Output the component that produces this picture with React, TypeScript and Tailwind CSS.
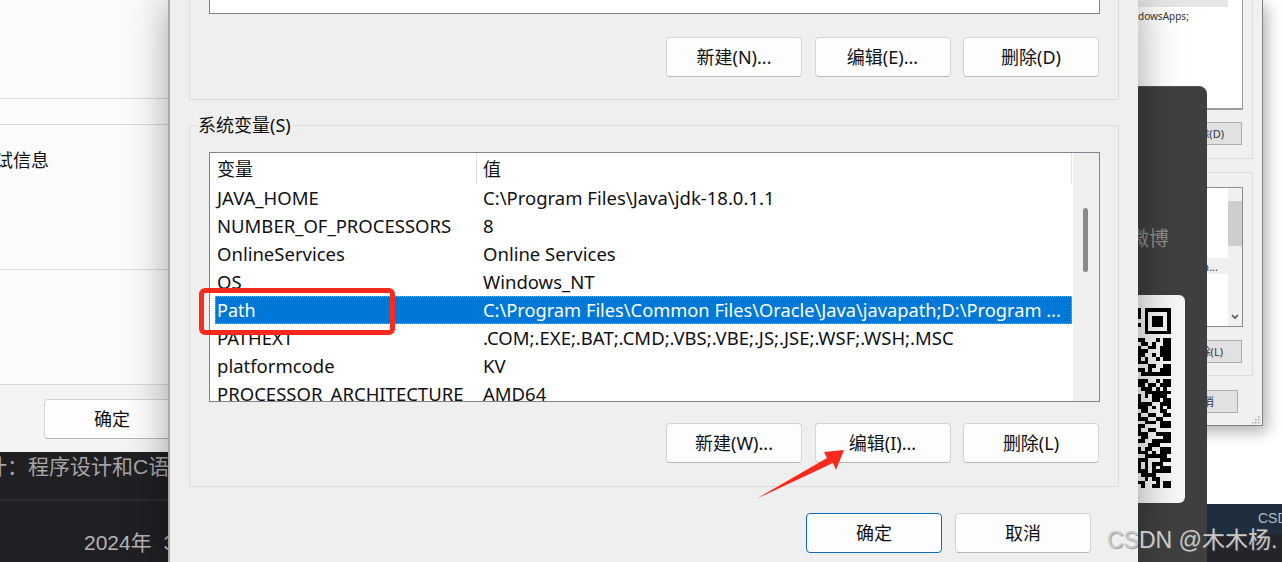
const QR = [
  "101111111",
  "101000001",
  "101011101",
  "001011101",
  "101011101",
  "001000001",
  "001111111",
  "000000000",
  "110001011",
  "011010011",
  "100110111",
  "111000111",
  "110010111",
  "101001011",
  "111000000",
  "000110011",
  "110100111",
  "011111111",
  "000000000",
  "111001011",
  "110110111",
  "011101010",
  "001111111",
  "101011110",
  "100011011",
  "111100111",
  "111010101",
  "011000110",
  "100110011",
  "111001100",
  "001110111",
  "110000111",
  "100110000",
  "111001111",
  "011000011",
  "110011111",
  "000111000",
  "101100111",
  "111010111",
  "001111110",
  "111000111",
  "101011100",
  "101010111",
  "111011111",
  "011110000",
  "001011000",
  "110001011",
  "010011011",
];

function Btn({ children, primary, className }: { children: React.ReactNode; primary?: boolean; className?: string }) {
  return (
    <div
      className={
        "flex h-10 w-[136px] items-center justify-center rounded-[4px] border bg-[#fdfdfd] text-[18px] text-[#111] " +
        (primary ? "border-[#0f6cbd] " : "border-[#d4d4d4] border-b-[#b8b8b8] ") +
        (className ?? "")
      }
    >
      {children}
    </div>
  );
}

const ROWS = [
  ["JAVA_HOME", "C:\\Program Files\\Java\\jdk-18.0.1.1"],
  ["NUMBER_OF_PROCESSORS", "8"],
  ["OnlineServices", "Online Services"],
  ["OS", "Windows_NT"],
  ["Path", "C:\\Program Files\\Common Files\\Oracle\\Java\\javapath;D:\\Program ..."],
  ["PATHEXT", ".COM;.EXE;.BAT;.CMD;.VBS;.VBE;.JS;.JSE;.WSF;.WSH;.MSC"],
  ["platformcode", "KV"],
  ["PROCESSOR_ARCHITECTURE", "AMD64"],
];

export default function App() {
  return (
    <div className="relative h-[562px] w-[1282px] overflow-hidden bg-white font-['Noto_Sans','Noto_Sans_CJK_SC',sans-serif] text-[18px] leading-none text-[#111]">
      {/* left window behind */}
      <div className="absolute left-0 top-0 flex h-[562px] w-[200px] flex-col">
        <div className="h-[452px] bg-[#fbfbfb]">
          <div className="h-[99px] border-b border-[#dadada]" />
          <div className="h-[26px] border-b border-[#dadada]" />
          <div className="h-[145px] border-b border-[#dadada] pt-[26px]">
            <div className="ml-[-5px] whitespace-nowrap">试信息</div>
          </div>
          <div className="h-[115px] border-b border-[#dadada]" />
          <div className="h-[67px] bg-[#f4f4f4] pl-[44px] pt-[14px]">
            <Btn>确定</Btn>
          </div>
        </div>
        <div className="flex flex-1 flex-col bg-[#1f1f24] text-[#a6a6a6]">
          <div className="h-[49px] border-b-2 border-[#2c2c2f] pt-[4px]">
            <div className="ml-[-14px] whitespace-nowrap font-['Liberation_Sans','Noto_Sans_CJK_SC',sans-serif] text-[21px]">计：程序设计和C语言</div>
          </div>
          <div className="whitespace-pre pl-[84px] pt-[31px] font-['Liberation_Sans','Noto_Sans_CJK_SC',sans-serif] text-[21px] text-[#b4b4b4]">2024年  3</div>
        </div>
      </div>

      {/* right window behind */}
      <div className="absolute left-[1138px] top-0 h-[426px] w-[125px] border-b border-r border-[#808080] bg-[#f0f0f0] text-[11px] shadow-[4px_6px_14px_rgba(0,0,0,0.3)]">
        <div className="h-[159px] w-[115px] border-b border-r border-[#dcdcdc]">
          <div className="h-[110px] w-[105px] border-b-2 border-r border-[#9a9aa4] bg-white">
            <div className="h-[7px] w-[90px] bg-[#e6e6e6]" />
            <div className="whitespace-nowrap pt-[4px] text-[10px] text-[#333]">dowsApps;</div>
          </div>
          <div className="mt-[12px] flex h-[23px] w-[104px] items-center justify-end border border-[#adadad] bg-[#e1e1e1] pr-[17px] text-[#334]">除(D)</div>
        </div>
        <div className="mt-[13px] h-[204px] w-[115px] border-b border-r border-t border-[#dcdcdc] pt-[14px]">
          <div className="flex h-[140px] w-[105px] border border-l-0 border-[#8a8a94] bg-white">
            <div className="flex-1 pt-[70px]">
              <div className="flex h-[16px] items-center justify-end bg-[#f0f0f0] pr-[10px] text-[11px] text-[#333]">n...</div>
            </div>
            <div className="flex w-[14px] flex-col items-center justify-between bg-[#f0f0f0]">
              <div className="flex h-[34px] w-full flex-col">
                <svg viewBox="0 0 14 20" className="h-[20px] w-[14px]"><path d="M4 10l3-3 3 3" fill="none" stroke="#555" strokeWidth="1.6" /></svg>
                <div className="mt-[13px] h-[45px] w-full shrink-0 bg-[#cdcdcd]" />
              </div>
              <svg viewBox="0 0 14 20" className="h-[20px] w-[14px]"><path d="M4 9l3 3 3-3" fill="none" stroke="#555" strokeWidth="1.6" /></svg>
            </div>
          </div>
          <div className="mt-[13px] flex h-[23px] w-[104px] items-center justify-end border border-[#adadad] bg-[#e1e1e1] pr-[18px] text-[#334]">除(L)</div>
        </div>
        <div className="mt-[14px] flex h-[23px] w-[100px] items-center justify-end border border-[#adadad] bg-[#e1e1e1] pr-[23px] text-[#334]">取消</div>
        <svg viewBox="0 0 8 8" className="absolute bottom-[1px] right-[2px] h-[8px] w-[8px]" fill="#a8a8a8">
          <rect x="6" y="0" width="1.5" height="1.5" /><rect x="3" y="3" width="1.5" height="1.5" /><rect x="6" y="3" width="1.5" height="1.5" /><rect x="0" y="6" width="1.5" height="1.5" /><rect x="3" y="6" width="1.5" height="1.5" /><rect x="6" y="6" width="1.5" height="1.5" />
        </svg>
      </div>

      {/* page footer at right */}
      <div className="absolute left-[1207px] top-[504px] flex h-[58px] w-[75px] flex-col">
        <div className="h-[30px] bg-[#1f2e3e] pl-[51px] pt-[7px] font-['Liberation_Sans',sans-serif] text-[14px] text-[#aebbc4]">CSD</div>
        <div className="flex-1 bg-[#24242a]" />
      </div>

      {/* dark share panel */}
      <div className="absolute left-[1060px] top-[86px] h-[476px] w-[147px] rounded-tr-[8px] border-t border-[#555] bg-[#3f3f3f]">
        <div className="absolute left-[69px] top-[142px] whitespace-nowrap text-[20px] text-[#8b8b8b]">微博</div>
        <div className="absolute left-[40px] top-[208px] h-[208px] w-[85px] rounded-[6px] bg-[#f7f7f7]">
          <svg viewBox="0 0 9 48" className="absolute left-[37px] top-[13px] h-[180px] w-[34px]" preserveAspectRatio="none" shapeRendering="crispEdges">
            {QR.flatMap((r, y) =>
              r.split("").map((c, x) => (c === "1" ? <rect key={x + "-" + y} x={x} y={y} width="1" height="1" fill="#000" /> : null))
            )}
          </svg>
        </div>
      </div>

      {/* main dialog */}
      <div className="absolute left-[170px] top-0 h-[562px] w-[968px] bg-[#efefef] px-[19px] shadow-[-2px_0_0_#a9a9a9,0_0_40px_rgba(0,0,0,0.38)]">
        <div className="h-[100px] w-[930px] border-x border-b border-[#dcdcdc] pl-[19px]">
          <div className="h-[14px] w-[891px] border-x border-b border-[#83838c] bg-white" />
          <div className="mt-[23px] flex w-[890px] justify-end gap-[12.5px]">
            <Btn>新建(N)...</Btn>
            <Btn>编辑(E)...</Btn>
            <Btn>删除(D)</Btn>
          </div>
        </div>

        <div className="relative mt-[25px] h-[362px] w-[930px] border border-[#dcdcdc] pl-[19px] pt-[26px]">
          <div className="absolute left-[6px] top-[-10px] bg-[#efefef] px-[2px] text-[18px]">系统变量(S)</div>
          <div className="flex h-[250px] w-[891px] overflow-hidden border border-[#83838c] bg-white">
            <div className="flex-1 text-[18.5px]">
              <div className="ml-[5px] mr-[1px] flex h-[31px] items-center text-[18px]">
                <div className="h-full w-[262px] border-r border-[#e4e4e4] pl-[2px] leading-[33px]">变量</div>
                <div className="h-full flex-1 border-r border-[#e4e4e4] pl-[6px] leading-[33px]">值</div>
              </div>
              {ROWS.map(([k, v]) => {
                const sel = k === "Path";
                return (
                  <div
                    key={k}
                    className={
                      "ml-[5px] mr-[1px] flex h-[28px] items-center whitespace-nowrap " +
                      (sel ? "border border-dotted border-[#e09a4a] bg-[#0078d7] text-white" : "")
                    }
                  >
                    <div className={sel ? "w-[261px] pl-[1px] text-[18px]" : "w-[262px] pl-[2px]"}>{k}</div>
                    <div className={sel ? "pl-[6px] text-[18.25px]" : "pl-[6px]"}>{v}</div>
                  </div>
                );
              })}
            </div>
            <div className="relative w-[26px] bg-[#f0f0f0]">
              <div className="absolute left-[10px] top-[55px] h-[64px] w-[5px] rounded-full bg-[#8a8a8a]" />
            </div>
          </div>
          <div className="mt-[21px] flex w-[890px] justify-end gap-[12.5px]">
            <Btn>新建(W)...</Btn>
            <Btn>编辑(I)...</Btn>
            <Btn>删除(L)</Btn>
          </div>
        </div>

        <div className="mt-[26px] flex w-[902px] justify-end gap-[13px]">
          <Btn primary>确定</Btn>
          <Btn>取消</Btn>
        </div>
      </div>

      {/* annotations */}
      <div className="absolute left-[199px] top-[288px] h-[47px] w-[196px] rounded-[6px] border-[5px] border-[#fb2a1c]" />
      <svg className="absolute left-0 top-0 h-[562px] w-[1282px]" viewBox="0 0 1282 562">
        <polygon points="756,499 827,458 824,452 844,450 836,470 833,463" fill="#fb2a1c" />
      </svg>
      <div className="absolute left-[1107px] top-[527px] whitespace-nowrap font-['Liberation_Sans','Noto_Sans_CJK_SC',sans-serif] text-[23px] leading-[26px] text-[#c9c9c9] [text-shadow:1px_1px_1px_rgba(90,90,90,0.6)]">
        CSDN @木木杨.
      </div>
    </div>
  );
}
